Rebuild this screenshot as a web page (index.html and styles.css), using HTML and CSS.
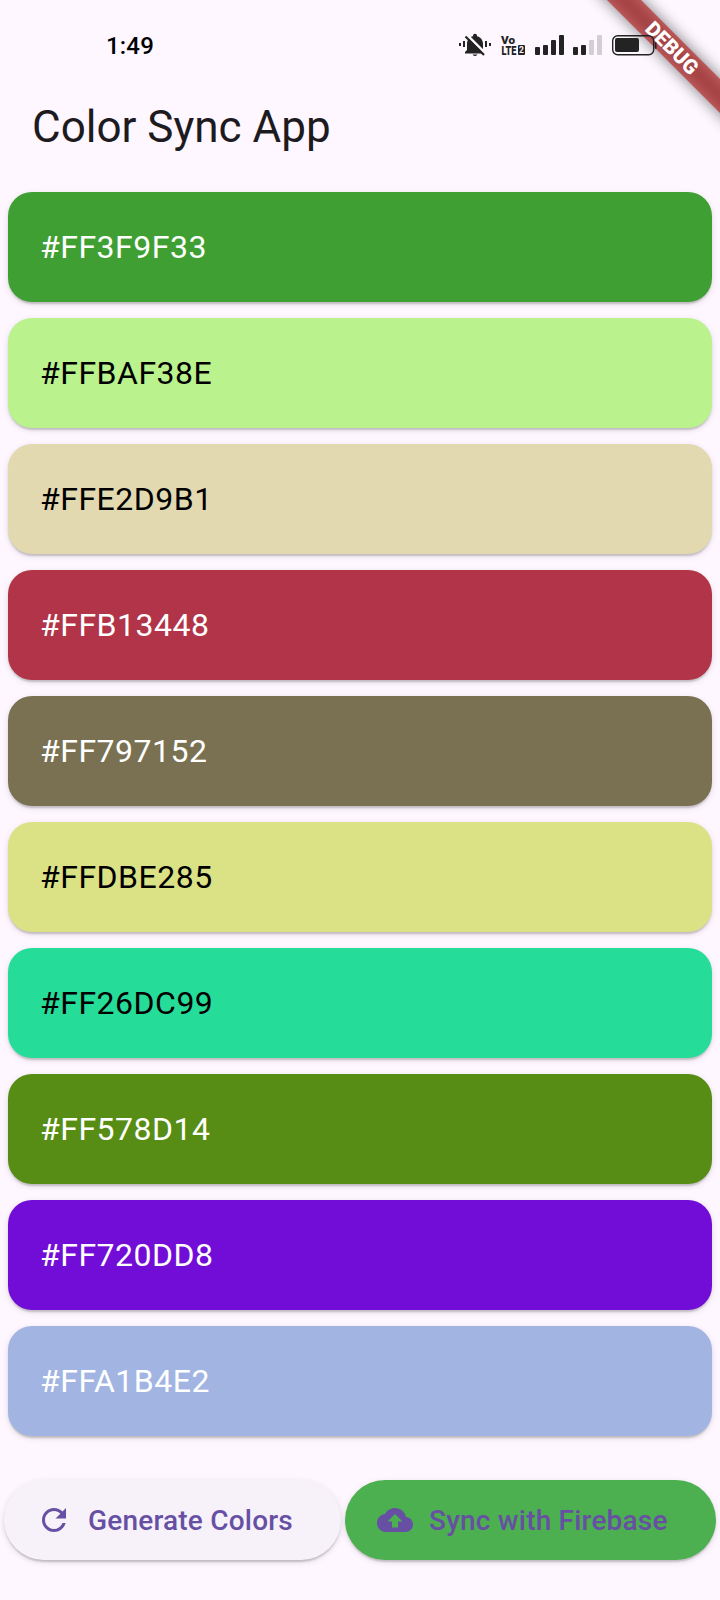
FILE: index.html
```html
<!DOCTYPE html>
<html lang="en">
<head>
<meta charset="utf-8">
<title>Color Sync App</title>
<link rel="stylesheet" href="styles.css">
</head>
<body>
<div class="debug"><div class="debug-shadow"></div><div class="debug-band">DEBUG</div></div>
<header class="status">
  <span class="time">1:49</span>
  <svg class="status-icons" width="204" height="32" viewBox="455 28 204 32">
    <g fill="#232323">
      <path d="M465 53.5v-1.500l2-2v-6c0-4 2.500-7 6-7.700v-1.300q2-2.500 4 0v1.300c3.500.7 6 3.700 6 7.700v6l2 2v1.500zM472.500 54.500h5q-2.500 3-5 0z"/>
      <path d="M459 43h2v3h-2zM463 41h2v6h-2zM485 41h2v6h-2zM489 43h2v3h-2z"/>
      <path d="M467.500 35.500l18 18" stroke="#fef7ff" stroke-width="2.500"/>
      <path d="M465.500 36.500l18.500 18.500" stroke="#232323" stroke-width="2.200"/>
      <text class="volte" x="501" y="43.500" font-size="11.500" textLength="14" lengthAdjust="spacingAndGlyphs">Vo</text>
      <text class="volte" x="501.500" y="54.500" font-size="12" textLength="15" lengthAdjust="spacingAndGlyphs">LTE</text>
      <rect x="518" y="45" width="7" height="10" rx="1"/>
      <text class="sim" x="519" y="53" font-size="8.500">2</text>
      <rect x="535" y="47" width="5" height="8" rx="1"/><rect x="543" y="45" width="5" height="10" rx="1"/><rect x="551" y="40" width="5" height="15" rx="1"/><rect x="559" y="35" width="5" height="20" rx="1"/>
      <rect x="573" y="47" width="5" height="8" rx="1"/><rect x="581" y="45" width="5" height="10" rx="1"/>
      <g fill="#d3ced5"><rect x="589" y="40" width="5" height="15" rx="1"/><rect x="597" y="35" width="5" height="20" rx="1"/></g>
      <rect x="612.700" y="35.700" width="41" height="19" rx="5" fill="none" stroke="#232323" stroke-width="1.400"/>
      <rect x="615" y="38" width="24" height="14" rx="2"/>
      <rect x="655" y="42" width="1.500" height="7" rx=".7"/>
    </g>
  </svg>
</header>
<h1 class="title">Color Sync App</h1>
<main class="cards">
  <div class="card c1">#FF3F9F33</div>
  <div class="card c2">#FFBAF38E</div>
  <div class="card c3">#FFE2D9B1</div>
  <div class="card c4">#FFB13448</div>
  <div class="card c5">#FF797152</div>
  <div class="card c6">#FFDBE285</div>
  <div class="card c7">#FF26DC99</div>
  <div class="card c8">#FF578D14</div>
  <div class="card c9">#FF720DD8</div>
  <div class="card c10">#FFA1B4E2</div>
</main>
<footer class="actions">
  <button class="btn generate"><svg width="36" height="36" viewBox="0 0 24 24"><path d="M17.65 6.35C16.2 4.9 14.21 4 12 4c-4.42 0-7.99 3.58-7.99 8s3.57 8 7.99 8c3.73 0 6.84-2.55 7.73-6h-2.08c-.82 2.33-3.04 4-5.65 4-3.31 0-6-2.69-6-6s2.69-6 6-6c1.66 0 3.14.69 4.22 1.780L13 11h7V4l-2.350 2.350z"/></svg><span>Generate Colors</span></button>
  <button class="btn sync"><svg width="36" height="36" viewBox="0 0 24 24"><path d="M19.35 10.04C18.67 6.59 15.64 4 12 4 9.11 4 6.6 5.64 5.35 8.04 2.34 8.36 0 10.91 0 14c0 3.31 2.69 6 6 6h13c2.76 0 5-2.24 5-5 0-2.64-2.05-4.78-4.65-4.96zM14 13v4h-4v-4H7l5-5 5 5h-3z"/></svg><span>Sync with Firebase</span></button>
</footer>
</body>
</html>
```
FILE: styles.css
```css
* { box-sizing: border-box; }
body { margin: 0; width: 720px; height: 1600px; overflow: hidden; position: relative; background: #fef7ff; font-family: Roboto, sans-serif; color: #1d1b20; }
.status { height: 88px; padding: 28px 61px 0 106px; display: flex; justify-content: space-between; align-items: flex-start; position: relative; z-index: 2; }
.time { font: 500 24px/36px Roboto, sans-serif; color: #000; letter-spacing: 0.2px; }
.status-icons { display: block; }
.volte { font-family: Roboto, sans-serif; font-weight: 900; }
.sim { font-family: Roboto, sans-serif; font-weight: 700; fill: #fef7ff; }
.title { margin: 0; padding-left: 32px; height: 80px; font-size: 44px; line-height: 78px; font-weight: 400; }
.cards { padding: 24px 8px 0; display: flex; flex-direction: column; gap: 16px; }
.card { height: 110px; padding-left: 32px; border-radius: 24px; font-size: 32px; line-height: 110px; letter-spacing: 0.5px; color: #fff; box-shadow: 0 4px 2px -2px rgba(0,0,0,.1), 0 2px 2px rgba(0,0,0,.08), 0 2px 6px rgba(0,0,0,.12); }
.c1 { background: #3f9f33; }
.c2 { background: #baf38e; color: #000; }
.c3 { background: #e2d9b1; color: #000; }
.c4 { background: #b13448; }
.c5 { background: #797152; }
.c6 { background: #dbe285; color: #000; }
.c7 { background: #26dc99; color: #000; }
.c8 { background: #578d14; }
.c9 { background: #720dd8; }
.c10 { background: #a1b4e2; }
.actions { padding: 44px 4px 0; display: flex; justify-content: space-between; }
.btn { height: 80px; padding: 0 0 0 32px; display: flex; align-items: center; gap: 16px; border: 0; border-radius: 40px; font: 500 28px/40px Roboto, sans-serif; letter-spacing: 0.2px; white-space: nowrap; color: #6750a4; box-shadow: 0 4px 2px -2px rgba(0,0,0,.1), 0 2px 2px rgba(0,0,0,.08), 0 2px 6px rgba(0,0,0,.12); }
.btn svg { fill: currentColor; flex: none; }
.btn span { padding-top: 2px; }
.generate { width: 337px; background: #f7f2fa; }
.sync { width: 371px; background: #4caf50; }
.debug { position: absolute; left: 572px; top: 36px; width: 200px; height: 24px; transform: rotate(45deg); z-index: 1; }
.debug-shadow { position: absolute; inset: 0; background: rgba(0,0,0,.5); filter: blur(7.5px); }
.debug-band { position: absolute; inset: 0; background: rgba(183,28,28,.627); color: #fff; font-size: 20.4px; line-height: 24px; font-weight: 900; text-align: center; }
```
